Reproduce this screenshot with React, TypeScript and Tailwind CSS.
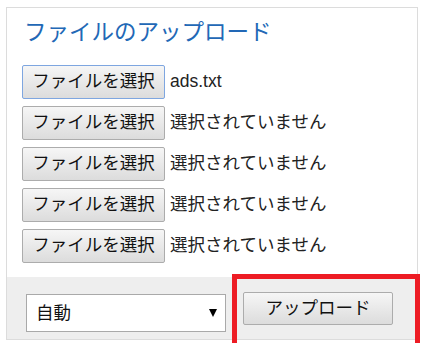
import React from 'react';

const font = { fontFamily: '"Liberation Sans", "Noto Sans CJK JP", sans-serif' };

const files = ['ads.txt', '選択されていません', '選択されていません', '選択されていません', '選択されていません'];

const FileRow: React.FC<{ name: string; focused?: boolean }> = ({ name, focused }) => (
  <div className="flex items-center h-[34px]">
    <button
      className={
        'w-[143px] h-[34px] shrink-0 rounded-[2px] border bg-gradient-to-b from-[#f6f6f6] to-[#dcdcdc] text-[17.5px] text-[#111] leading-none ' +
        (focused ? 'border-[#7ea6e0]' : 'border-[#acacac]')
      }
    >
      ファイルを選択
    </button>
    <span className="ml-[5px] text-[17.5px] text-[#222] leading-none">{name}</span>
  </div>
);

export default function App() {
  return (
    <div className="relative w-[439px] h-[343px] bg-white overflow-hidden" style={font}>
      <div className="absolute left-[6px] top-[7px] w-[412px] h-[333px] border border-[#dcdcdc] flex flex-col">
        <div className="px-[15px] pt-[10px]">
          <h2 className="h-[30px] leading-[30px] text-[22.5px] text-[#2268b6] pl-[2px]">ファイルのアップロード</h2>
          <div className="mt-[17px] flex flex-col gap-[7px]">
            {files.map((f, i) => (
              <FileRow key={i} name={f} focused={i === 0} />
            ))}
          </div>
        </div>
        <div className="mt-auto h-[62px] bg-[#eeeeee] flex items-start pl-[19px]">
          <div className="relative mt-[17px] w-[200px] h-[38px]">
            <select className="appearance-none w-full h-full bg-white border border-[#a9a9a9] pl-[9px] text-[17.5px] text-[#111] outline-none">
              <option>自動</option>
            </select>
            <svg className="absolute right-[9px] top-[15px] pointer-events-none" width="8" height="8" viewBox="0 0 8 8">
              <path d="M0 0 H8 L4 8 Z" fill="#000" />
            </svg>
          </div>
          <button className="ml-[17px] mt-[15px] w-[150px] h-[33px] rounded-[2px] border border-[#acacac] bg-gradient-to-b from-[#f6f6f6] to-[#dcdcdc] text-[17.5px] text-[#111] leading-none">
            アップロード
          </button>
        </div>
      </div>
      <div className="absolute left-[232px] top-[274px] w-[188px] h-[80px] border-[5px] border-[#ed1c24] pointer-events-none" />
    </div>
  );
}
